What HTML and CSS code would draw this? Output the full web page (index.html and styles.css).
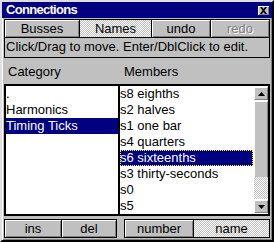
FILE: index.html
```html
<!DOCTYPE html>
<html>
<head>
<meta charset="utf-8">
<link rel="stylesheet" href="styles.css">
</head>
<body>
<div class="win">
  <div class="title">
    <span class="title-text">Connections</span>
    <span class="close"><svg width="9" height="7" viewBox="0 0 9 7"><path d="M1 0h2l1.5 2 1.5-2h2l-2.5 3.5 2.5 3.5h-2l-1.5-2-1.5 2h-2l2.5-3.5z" fill="#000"/></svg></span>
  </div>
  <div class="toolbar">
    <div class="btn b-busses">Busses</div>
    <div class="btn b-names checked">Names</div>
    <div class="btn b-undo">undo</div>
    <div class="btn b-redo disabled">redo</div>
  </div>
  <div class="status">Click/Drag to move. Enter/DblClick to edit.</div>
  <div class="heads">
    <div class="head-cat">Category</div>
    <div class="head-mem">Members</div>
  </div>
  <div class="lists">
    <div class="list cat">
      <div class="row">.</div>
      <div class="row">Harmonics</div>
      <div class="row sel">Timing Ticks</div>
    </div>
    <div class="list mem">
      <div class="items">
        <div class="row">s8 eighths</div>
        <div class="row">s2 halves</div>
        <div class="row">s1 one bar</div>
        <div class="row">s4 quarters</div>
        <div class="row sel focus">s6 sixteenths</div>
        <div class="row">s3 thirty-seconds</div>
        <div class="row">s0</div>
        <div class="row">s5</div>
      </div>
      <div class="sbar">
        <div class="sbtn"><svg width="7" height="4" viewBox="0 0 7 4"><path d="M3.5 0L7 4H0z" fill="#000"/></svg></div>
        <div class="thumb"></div>
        <div class="track"></div>
        <div class="sbtn"><svg width="7" height="4" viewBox="0 0 7 4"><path d="M0 0h7L3.5 4z" fill="#000"/></svg></div>
      </div>
    </div>
  </div>
  <div class="bottom">
    <div class="grp">
      <div class="btn b-ins">ins</div>
      <div class="btn b-del">del</div>
    </div>
    <div class="grp">
      <div class="btn b-num">number</div>
      <div class="btn b-name checked">name</div>
    </div>
  </div>
</div>
</body>
</html>
```
FILE: styles.css
```css
html, body {
  margin: 0;
  padding: 0;
  background: #c0c0c0;
}
.win {
  width: 274px;
  height: 242px;
  box-sizing: border-box;
  background: #c0c0c0;
  border-top: 2px solid #dfdfdf;
  border-left: 2px solid #dfdfdf;
  border-right: 2px solid #000;
  border-bottom: 2px solid #000;
  box-shadow: inset 1px 1px #fff, inset -1px -1px #808080;
  display: flex;
  flex-direction: column;
  font-family: "Liberation Sans", Arial, sans-serif;
  font-size: 13px;
  color: #000;
}
.title {
  height: 16px;
  background: #000080;
  display: flex;
  align-items: center;
  justify-content: space-between;
  padding: 0 3px 0 4px;
  flex: none;
}
.title-text {
  color: #fff;
  font-weight: bold;
  font-size: 13px;
  letter-spacing: -0.7px;
  line-height: 16px;
}
.close {
  width: 11px;
  height: 9px;
  background: #c0c0c0;
  box-shadow: inset 1px 1px #fff, inset -1px -1px #808080;
  display: flex;
  align-items: center;
  justify-content: center;
}
.close svg { display: block; }
.toolbar {
  display: flex;
  margin: 1px 0 0 2px;
  height: 19px;
  flex: none;
}
.btn {
  box-sizing: border-box;
  height: 19px;
  border: 1px solid #000;
  background: #c0c0c0;
  box-shadow: inset 1px 1px #fff, inset -1px -1px #808080;
  text-align: center;
  line-height: 17px;
  margin-right: -1px;
}
.checked {
  background-color: #fff;
  background-image: repeating-conic-gradient(#c0c0c0 0 25%, #fff 0 50%);
  background-size: 2px 2px;
  box-shadow: none;
}
.disabled {
  color: #808080;
  text-shadow: 1px 1px #fff;
}
.b-busses { width: 76px; }
.b-names { width: 73px; }
.b-undo { width: 60px; }
.b-redo { width: 60px; }
.status {
  margin: 0 0 0 2px;
  width: 266px;
  box-sizing: border-box;
  height: 20px;
  border: 1px solid #000;
  border-top: none;
  line-height: 18px;
  padding-left: 1px;
  flex: none;
  white-space: nowrap;
}
.heads {
  display: flex;
  height: 26px;
  flex: none;
  line-height: 18px;
  padding-top: 5px;
  box-sizing: border-box;
}
.head-cat { width: 119px; padding-left: 6px; box-sizing: border-box; }
.head-mem { padding-left: 3px; }
.lists {
  display: flex;
  margin-left: 2px;
  height: 132px;
  flex: none;
}
.list {
  background: #fff;
  border: 2px solid #000;
  border-right: none;
  box-sizing: border-box;
  height: 132px;
}
.cat { width: 114px; }
.mem {
  width: 152px;
  border-right: 2px solid #000;
  display: flex;
}
.items { flex: 1; }
.row {
  height: 16px;
  line-height: 16px;
  white-space: nowrap;
}
.sel {
  background: #000080;
  color: #fff;
}
.focus {
  outline: 1px dotted #ffff00;
  outline-offset: -1px;
}
.sbar {
  width: 14px;
  display: flex;
  flex-direction: column;
  border-left: 1px solid #fff;
}
.sbtn {
  height: 13px;
  background: #c0c0c0;
  border-left: 1px solid #fff;
  border-top: 1px solid #fff;
  border-right: 1px solid #808080;
  border-bottom: 1px solid #808080;
  box-sizing: border-box;
  display: flex;
  align-items: center;
  justify-content: center;
  margin: 1px 0;
}
.sbtn svg { display: block; }
.thumb {
  height: 76px;
  background: #c0c0c0;
  border-left: 1px solid #fff;
  border-top: 1px solid #fff;
  border-right: 1px solid #808080;
  box-sizing: border-box;
}
.track {
  flex: 1;
  background-color: #fff;
  background-image: repeating-conic-gradient(#c0c0c0 0 25%, #fff 0 50%);
  background-size: 2px 2px;
}
.bottom {
  display: flex;
  margin: 3px 0 0 2px;
  justify-content: space-between;
  width: 265px;
  flex: none;
}
.grp { display: flex; }
.b-ins { width: 58px; }
.b-del { width: 56px; }
.b-num { width: 70px; }
.b-name { width: 77px; }
```
